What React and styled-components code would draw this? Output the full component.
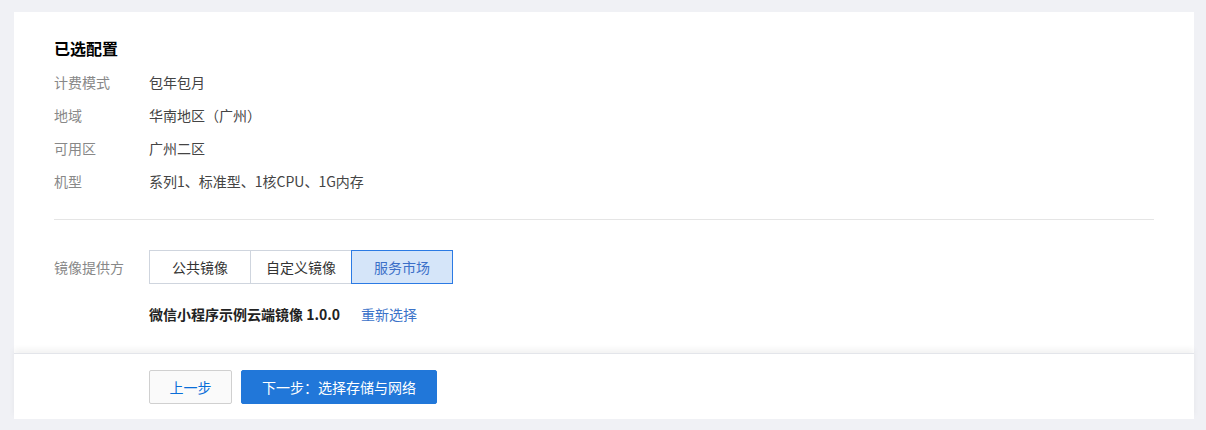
import styled, { createGlobalStyle } from "styled-components";

const Global = createGlobalStyle`
  body {
    margin: 0;
    background: #f0f1f5;
    font-family: "Noto Sans CJK SC", "Liberation Sans", sans-serif;
    font-size: 14px;
    color: #333;
  }
`;

const Page = styled.div`
  padding: 12px 12px 11px 14px;
`;

const Card = styled.div`
  background: #fff;
  display: flex;
  flex-direction: column;
`;

const Content = styled.div`
  padding: 25px 40px 29px;
`;

const Title = styled.h3`
  margin: 0 0 6px;
  font-size: 16px;
  line-height: 22px;
  font-weight: 700;
  color: #000;
`;

const Row = styled.div`
  display: flex;
  align-items: center;
  height: ${(p) => (p.$tall ? "34px" : "33px")};
`;

const Label = styled.div`
  width: 95px;
  flex-shrink: 0;
  color: #888;
`;

const Value = styled.div`
  color: #444;
`;

const Divider = styled.hr`
  border: 0;
  border-top: 1px solid #e5e5e5;
  margin: 22px 0 30px;
`;

const Segment = styled.div`
  display: flex;
`;

const SegButton = styled.button`
  width: 102px;
  height: 34px;
  font: inherit;
  font-size: 14px;
  color: ${(p) => (p.$active ? "#3b6fc8" : "#333")};
  background: ${(p) => (p.$active ? "#d5e5f9" : "#fff")};
  border: 1px solid ${(p) => (p.$active ? "#2b7ae4" : "#cfd5de")};
  margin-left: -1px;
  position: relative;
  z-index: ${(p) => (p.$active ? 1 : 0)};
  cursor: pointer;
  &:first-child {
    margin-left: 0;
  }
`;

const Picked = styled.div`
  display: flex;
  align-items: center;
  margin: 20px 0 0 95px;
  line-height: 20px;
`;

const PickedName = styled.span`
  font-weight: 700;
  color: #222;
`;

const Link = styled.a`
  margin-left: 21px;
  color: #3b73c9;
  cursor: pointer;
`;

const Footer = styled.div`
  display: flex;
  gap: 9px;
  height: 66px;
  box-sizing: border-box;
  padding: 16px 0 0 135px;
  border-top: 1px solid #e3e5ea;
  box-shadow: 0 -4px 6px rgba(0, 0, 0, 0.05);
`;

const Button = styled.button`
  height: 34px;
  width: ${(p) => p.$w}px;
  font: inherit;
  font-size: 14px;
  border-radius: 2px;
  cursor: pointer;
  color: ${(p) => (p.$primary ? "#fff" : "#0a6ed8")};
  background: ${(p) => (p.$primary ? "#2177d9" : "#fafafa")};
  border: 1px solid ${(p) => (p.$primary ? "#2177d9" : "#d0d0d0")};
`;

const rows = [
  ["计费模式", "包年包月"],
  ["地域", "华南地区（广州）"],
  ["可用区", "广州二区"],
  ["机型", "系列1、标准型、1核CPU、1G内存"],
];

export default function App() {
  return (
    <>
      <Global />
      <Page>
        <Card>
          <Content>
            <Title>已选配置</Title>
            {rows.map(([k, v]) => (
              <Row key={k}>
                <Label>{k}</Label>
                <Value>{v}</Value>
              </Row>
            ))}
            <Divider />
            <Row $tall>
              <Label>镜像提供方</Label>
              <Segment>
                <SegButton>公共镜像</SegButton>
                <SegButton>自定义镜像</SegButton>
                <SegButton $active>服务市场</SegButton>
              </Segment>
            </Row>
            <Picked>
              <PickedName>微信小程序示例云端镜像 1.0.0</PickedName>
              <Link>重新选择</Link>
            </Picked>
          </Content>
          <Footer>
            <Button $w={83}>上一步</Button>
            <Button $w={196} $primary>下一步：选择存储与网络</Button>
          </Footer>
        </Card>
      </Page>
    </>
  );
}
